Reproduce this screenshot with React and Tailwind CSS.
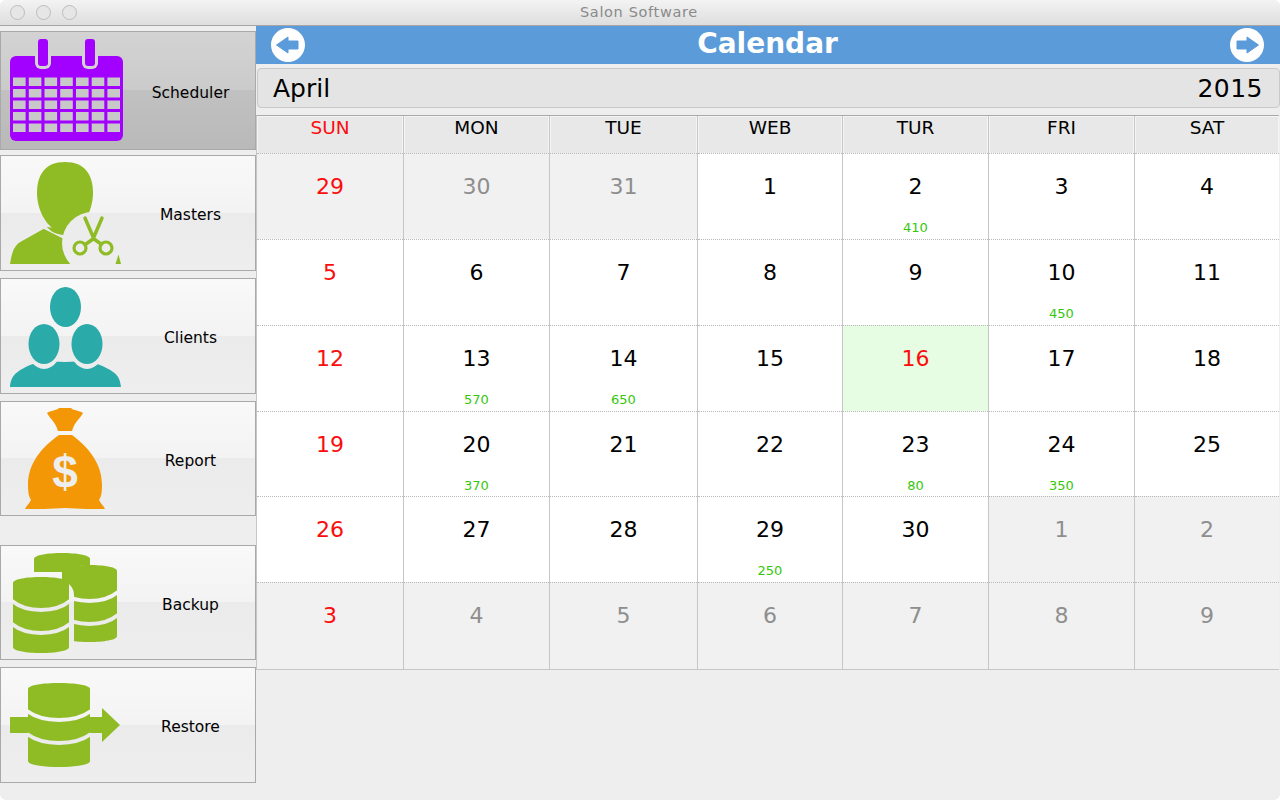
const GREEN = "#8fbc24";

const COLUMNS = ["SUN", "MON", "TUE", "WEB", "TUR", "FRI", "SAT"];

const WEEKS = [
  [
    { d: 29, red: true, off: true },
    { d: 30, off: true },
    { d: 31, off: true },
    { d: 1 },
    { d: 2, n: 410 },
    { d: 3 },
    { d: 4 },
  ],
  [
    { d: 5, red: true },
    { d: 6 },
    { d: 7 },
    { d: 8 },
    { d: 9 },
    { d: 10, n: 450 },
    { d: 11 },
  ],
  [
    { d: 12, red: true },
    { d: 13, n: 570 },
    { d: 14, n: 650 },
    { d: 15 },
    { d: 16, red: true, today: true },
    { d: 17 },
    { d: 18 },
  ],
  [
    { d: 19, red: true },
    { d: 20, n: 370 },
    { d: 21 },
    { d: 22 },
    { d: 23, n: 80 },
    { d: 24, n: 350 },
    { d: 25 },
  ],
  [
    { d: 26, red: true },
    { d: 27 },
    { d: 28 },
    { d: 29, n: 250 },
    { d: 30 },
    { d: 1, off: true },
    { d: 2, off: true },
  ],
  [
    { d: 3, red: true, off: true },
    { d: 4, off: true },
    { d: 5, off: true },
    { d: 6, off: true },
    { d: 7, off: true },
    { d: 8, off: true },
    { d: 9, off: true },
  ],
];

function SchedulerIcon() {
  const xs = [13, 28.8, 44.5, 60.2, 76, 91.7, 107.4];
  const ys = [45.5, 57, 68.5, 80, 91.5];
  return (
    <svg width="124" height="117" viewBox="0 0 124 117">
      <rect x="10" y="24" width="113" height="85" rx="6" fill="#a200ff" />
      <rect x="35" y="17" width="16" height="20" rx="6" fill="#d4d4d4" />
      <rect x="82" y="17" width="16" height="20" rx="6" fill="#d4d4d4" />
      <rect x="38" y="7" width="10" height="27" rx="3" fill="#a200ff" />
      <rect x="85" y="7" width="10" height="27" rx="3" fill="#a200ff" />
      {ys.map((y) =>
        xs.map((x) => (
          <rect key={`${x}-${y}`} x={x} y={y} width="12.6" height="8.5" fill="#c8c8c8" />
        )),
      )}
    </svg>
  );
}

function MastersIcon() {
  return (
    <svg width="124" height="116" viewBox="0 0 124 116">
      <defs>
        <mask id="masters-cut">
          <rect width="124" height="116" fill="white" />
          <circle cx="93" cy="88" r="31" fill="black" />
          <path d="M44 68 C50 78 58 80 66 80 L64 84 L44 74 Z" fill="black" />
        </mask>
      </defs>
      <g mask="url(#masters-cut)">
        <path d="M10 109 C12 97 14 90 22 86 L47 72 L95 78 L110 109 Z" fill={GREEN} />
        <path d="M65 7 C85 7 93 20 93 38 C93 58 80 78 65 78 C50 78 37 58 37 38 C37 20 45 7 65 7 Z" fill={GREEN} />
      </g>
      <path d="M115.5 109 L118.5 99.5 L121 109 Z" fill={GREEN} />
      <path
        d="M85 63 L94 84 L101 89 M102 63 L93 84 L86 89"
        fill="none"
        stroke={GREEN}
        strokeWidth="3.5"
        strokeLinejoin="round"
        strokeLinecap="round"
      />
      <circle cx="80" cy="93" r="6" fill="none" stroke={GREEN} strokeWidth="3.2" />
      <circle cx="106" cy="93" r="6" fill="none" stroke={GREEN} strokeWidth="3.2" />
    </svg>
  );
}

function ClientsIcon() {
  const teal = "#2aaba9";
  return (
    <svg width="124" height="116" viewBox="0 0 124 116">
      <defs>
        <mask id="clients-cut">
          <rect width="124" height="116" fill="white" />
          <ellipse cx="44" cy="66" rx="18" ry="25" fill="black" />
          <ellipse cx="87" cy="66" rx="18" ry="25" fill="black" />
        </mask>
      </defs>
      <path
        d="M10 109 C11 98 15 94 30 87 L42 83 L65 84 L88 83 L100 87 C116 94 120 98 121 109 Z"
        fill={teal}
        mask="url(#clients-cut)"
      />
      <ellipse cx="44" cy="66" rx="15.5" ry="20" fill={teal} />
      <ellipse cx="87" cy="66" rx="15.5" ry="20" fill={teal} />
      <ellipse cx="65.5" cy="29" rx="15.5" ry="20" fill={teal} />
    </svg>
  );
}

function ReportIcon() {
  const orange = "#f39707";
  return (
    <svg width="124" height="115" viewBox="0 0 124 115">
      <path d="M47 12 C51 9 56 10 59 7 L71 7 C74 10 79 9 83 12 C80 18 75 20 72 30 L58 30 C55 20 50 18 47 12 Z" fill={orange} />
      <path
        d="M59 34 L72 34 C88 46 102 62 102 84 C102 92 101 96 99 99 C101 103 104 105 105 108 L86 108 L65 107 L44 108 L25 108 C26 105 29 103 31 99 C29 96 28 92 28 84 C28 62 42 46 59 34 Z"
        fill={orange}
      />
      <text
        x="65"
        y="87"
        textAnchor="middle"
        fontSize="46"
        fontWeight="700"
        fill="#eeeeee"
        style={{ fontFamily: '"Liberation Sans", sans-serif' }}
      >
        $
      </text>
    </svg>
  );
}

function drumPath(x, y, w, h) {
  const r = 6;
  return `M${x} ${y + r} C${x} ${y - 2} ${x + w} ${y - 2} ${x + w} ${y + r} L${x + w} ${y + h - r} C${x + w} ${y + h + 2} ${x} ${y + h + 2} ${x} ${y + h - r} Z`;
}

// light band across a drum, sagging like the edge of a disc
function bandPath(x, w, y) {
  return `M${x - 1} ${y} C${x + w * 0.25} ${y + 12} ${x + w * 0.75} ${y + 12} ${x + w + 1} ${y}`;
}

function BackupIcon() {
  return (
    <svg width="124" height="115" viewBox="0 0 124 115">
      <defs>
        <mask id="backup-back">
          <rect width="124" height="115" fill="white" />
          <path d="M56 44 C56 12 124 12 124 44 L124 60 L56 60 Z" fill="black" />
          <rect x="0" y="27" width="124" height="40" fill="black" />
        </mask>
        <mask id="backup-right">
          <rect width="124" height="115" fill="white" />
          <path d={bandPath(62, 55, 47)} fill="none" stroke="black" strokeWidth="4" />
          <path d={bandPath(62, 55, 70)} fill="none" stroke="black" strokeWidth="4" />
          <path d="M8 50 C8 24 74 24 74 50 L74 112 L8 112 Z" fill="black" />
        </mask>
        <mask id="backup-left">
          <rect width="124" height="115" fill="white" />
          <path d={bandPath(13, 56, 56)} fill="none" stroke="black" strokeWidth="4" />
          <path d={bandPath(13, 56, 79)} fill="none" stroke="black" strokeWidth="4" />
        </mask>
      </defs>
      <path d={drumPath(34, 8, 56, 40)} fill={GREEN} mask="url(#backup-back)" />
      <path d={drumPath(62, 20, 55, 77)} fill={GREEN} mask="url(#backup-right)" />
      <path d={drumPath(13, 32, 56, 76)} fill={GREEN} mask="url(#backup-left)" />
    </svg>
  );
}

function RestoreIcon() {
  return (
    <svg width="124" height="116" viewBox="0 0 124 116">
      <defs>
        <mask id="restore-cut">
          <rect width="124" height="116" fill="white" />
          <path d={bandPath(28, 62, 44)} fill="none" stroke="black" strokeWidth="4" />
          <path d={bandPath(28, 62, 67)} fill="none" stroke="black" strokeWidth="4" />
        </mask>
      </defs>
      <g mask="url(#restore-cut)">
        <path d={drumPath(28, 16, 62, 84)} fill={GREEN} />
      </g>
      <path d="M10 50 L28 50 L28 66 L10 66 Z" fill={GREEN} />
      <path d="M90 50 L102 50 L102 41 L120 58 L102 75 L102 66 L90 66 Z" fill={GREEN} />
    </svg>
  );
}

function SideButton({ icon, label, active, className }) {
  const bg = active
    ? "bg-[linear-gradient(#d3d3d3_0%,#cbcbcb_50%,#c1c1c1_50%,#b9b9b9_100%)]"
    : "bg-[linear-gradient(#f9f9f9_0%,#f3f3f3_50%,#ebebeb_50%,#eeeeee_100%)]";
  return (
    <button
      className={`flex w-[256px] items-center border border-[#a9a9a9] ${bg} ${className}`}
    >
      <span className="shrink-0 -ml-px">{icon}</span>
      <span className="flex-1 pl-[2px] pt-[6px] text-center text-[15.5px] text-black">{label}</span>
    </button>
  );
}

function Arrow({ right }) {
  return (
    <svg width="36" height="36" viewBox="0 0 36 36">
      <circle cx="18" cy="18" r="17" fill="white" />
      <path
        d={
          right
            ? "M8 14 L18 14 L18 10 L29.5 18 L18 26 L18 22 L8 22 Z"
            : "M28 14 L18 14 L18 10 L6.5 18 L18 26 L18 22 L28 22 Z"
        }
        fill="#5b9bd9"
        stroke="#5b9bd9"
        strokeWidth="1"
        strokeLinejoin="round"
      />
    </svg>
  );
}

function DayCell({ cell, col, rowIndex }) {
  let bg = "bg-white";
  if (cell.off) bg = "bg-[#f1f1f1]";
  if (cell.today) bg = "bg-[#e6fde3]";
  let color = "text-black";
  if (cell.off) color = "text-[#8e8e8e]";
  if (cell.red) color = "text-[#fb0d0d]";
  return (
    <div
      className={`flex h-full flex-col items-center ${col > 0 ? "border-l border-l-[#c6c6c6]" : ""} ${bg} ${
        rowIndex === 5 ? "border-b border-b-[#c6c6c6]" : ""
      }`}
    >
      <div className="h-0 w-full border-t border-dotted border-[#b9b9b9]" />
      <span className={`mt-[18px] text-[22px] leading-[30px] ${color}`}>{cell.d}</span>
      {cell.n ? (
        <span className="mt-[18px] text-[13px] leading-[16px] text-[#35c80a]">{cell.n}</span>
      ) : null}
    </div>
  );
}

export default function App() {
  return (
    <div
      className="flex h-[800px] w-[1280px] flex-col overflow-hidden rounded-[6px] bg-[#eeeeee] text-black"
      style={{ fontFamily: '"DejaVu Sans", sans-serif' }}
    >
      <div className="flex h-[26px] shrink-0 items-center border-b border-[#a6a6a6] bg-[linear-gradient(#f3f3f3,#dedede)]">
        <div className="ml-[10px] flex gap-[11px]">
          <span className="h-[15px] w-[15px] rounded-full border border-[#bcbcbc] bg-[#e6e6e6]" />
          <span className="h-[15px] w-[15px] rounded-full border border-[#bcbcbc] bg-[#e6e6e6]" />
          <span className="h-[15px] w-[15px] rounded-full border border-[#bcbcbc] bg-[#e6e6e6]" />
        </div>
        <span className="ml-[503px] text-[14.5px] tracking-[0.65px] text-[#8a8a8a]">Salon Software</span>
      </div>

      <div className="flex flex-1">
        <aside className="flex w-[256px] shrink-0 flex-col pt-[5px]">
          <SideButton icon={<SchedulerIcon />} label="Scheduler" active className="h-[119px]" />
          <SideButton icon={<MastersIcon />} label="Masters" className="mt-[5px] h-[116px]" />
          <SideButton icon={<ClientsIcon />} label="Clients" className="mt-[7px] h-[116px]" />
          <SideButton icon={<ReportIcon />} label="Report" className="mt-[7px] h-[115px]" />
          <SideButton icon={<BackupIcon />} label="Backup" className="mt-[29px] h-[115px]" />
          <SideButton icon={<RestoreIcon />} label="Restore" className="mt-[7px] h-[116px]" />
        </aside>

        <main className="flex min-w-0 flex-1 flex-col">
          <div className="flex h-[38px] shrink-0 items-center justify-between bg-[#5b9bd9] pl-[14px] pr-[15px]">
            <Arrow />
            <span className="-mt-[2px] text-[28px] font-bold leading-none text-white">Calendar</span>
            <Arrow right />
          </div>

          <div className="ml-px mt-[4px] flex h-[40px] shrink-0 items-center justify-between rounded-[4px] border border-[#c9c9c9] bg-[#e4e4e4] pl-[15px] pr-[16px] pt-[2px] text-[25px]">
            <span>April</span>
            <span className="tracking-[0.5px]">2015</span>
          </div>

          <div className="mt-[7px] mr-px shrink-0 border-x border-t border-x-[#c6c6c6] border-t-[#a9a9a9]">
            <div className="grid h-[37px] grid-cols-[146px_146px_148px_145px_146px_146px_145px] bg-[#e8e8e8]">
              {COLUMNS.map((name, i) => (
                <div
                  key={name}
                  className={`text-center text-[18.5px] leading-[24px] shadow-[inset_1px_1px_0_#f5f5f5,inset_-1px_0_0_#f5f5f5] ${
                    i > 0 ? "border-l border-l-[#c6c6c6]" : ""
                  } ${i === 0 ? "text-[#fb0d0d]" : "text-black"}`}
                >
                  {name}
                </div>
              ))}
            </div>
            <div className="grid grid-cols-[146px_146px_148px_145px_146px_146px_145px] grid-rows-[86px_86px_86px_85px_86px_88px]">
              {WEEKS.map((week, r) =>
                week.map((cell, c) => (
                  <DayCell key={`${r}-${c}`} cell={cell} col={c} rowIndex={r} />
                )),
              )}
            </div>
          </div>
        </main>
      </div>
    </div>
  );
}
